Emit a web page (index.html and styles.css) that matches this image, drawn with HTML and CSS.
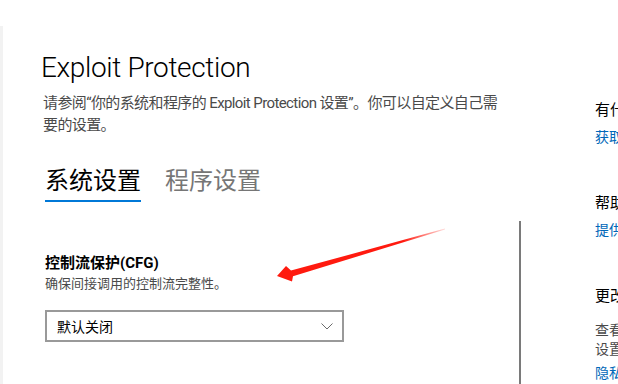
FILE: index.html
```html
<!DOCTYPE html>
<html lang="zh-CN">
<head>
<meta charset="utf-8">
<title>Exploit Protection</title>
<link rel="stylesheet" href="styles.css">
</head>
<body>
<div class="window">
  <div class="strip"></div>
  <main class="main">
    <h1 class="title">Exploit Protection</h1>
    <p class="desc">请参阅“你的系统和程序的 Exploit Protection 设置”。你可以自定义自己需<br>要的设置。</p>
    <nav class="tabs">
      <span class="tab tab-active">系统设置</span>
      <span class="tab">程序设置</span>
    </nav>
    <div class="body">
      <section class="content">
        <h2 class="setting-title">控制流保护(CFG)</h2>
        <p class="setting-desc">确保间接调用的控制流完整性。</p>
        <div class="select">
          <span class="select-text">默认关闭</span>
          <svg class="chevron" width="12" height="7" viewBox="0 0 12 7"><path d="M0.5 0.5 L6 6 L11.5 0.5" fill="none" stroke="#6b6b6b" stroke-width="1"/></svg>
        </div>
      </section>
      <div class="scrollbar"></div>
    </div>
  </main>
  <aside class="side">
    <div class="side-group">
      <div class="side-head">有什么疑问？</div>
      <a class="side-link">获取帮助</a>
    </div>
    <div class="side-group">
      <div class="side-head">帮助改进</div>
      <a class="side-link">提供反馈</a>
    </div>
    <div class="side-group">
      <div class="side-head">更改隐私设置</div>
      <div class="side-text">查看和更改<br>设置</div>
      <a class="side-link">隐私声明</a>
    </div>
  </aside>
  <svg class="arrow" width="618" height="384" viewBox="0 0 618 384">
    <defs>
      <linearGradient id="fade" x1="277" y1="0" x2="445" y2="0" gradientUnits="userSpaceOnUse">
        <stop offset="0" stop-color="#ff1a0f"/>
        <stop offset="0.75" stop-color="#ff1a0f"/>
        <stop offset="1" stop-color="#ff1a0f" stop-opacity="0.15"/>
      </linearGradient>
    </defs>
    <polygon fill="url(#fade)" points="445,228.6 445,229.6 293,276.2 292,281.5 277,276 286,266 291,270.6"/>
  </svg>
</div>
</body>
</html>
```

FILE: styles.css
```css
* { box-sizing: border-box; }
html, body { margin: 0; padding: 0; background: #fff; }
body {
  font-family: "Roboto", "Liberation Sans", "Noto Sans CJK SC", sans-serif;
  color: #000;
  width: 618px;
  height: 384px;
  overflow: hidden;
}
.window {
  position: relative;
  display: flex;
  width: 618px;
  height: 384px;
  overflow: hidden;
}
.strip {
  width: 3px;
  margin-top: 26px;
  background: #f2f2f2;
  flex: none;
}
.main {
  width: 518px;
  flex: none;
  padding: 50px 0 0 38px;
  display: flex;
  flex-direction: column;
}
.title {
  margin: 0;
  font-family: "Roboto", sans-serif;
  font-weight: 300;
  font-size: 28px;
  line-height: 36px;
  letter-spacing: -0.35px;
  color: #000;
  white-space: nowrap;
}
.desc {
  margin: 6px 0 0 2px;
  font-family: "Roboto", "Liberation Sans", "Noto Sans CJK SC", sans-serif;
  font-size: 15px;
  line-height: 22px;
  letter-spacing: -0.6px;
  color: #4a4a4a;
  white-space: nowrap;
}
.tabs {
  display: flex;
  gap: 24px;
  margin: 28px 0 0 4px;
}
.tab {
  font-family: "Noto Sans CJK SC", sans-serif;
  font-size: 24px;
  line-height: 30px;
  color: #767676;
  padding-bottom: 6px;
  border-bottom: 2px solid transparent;
}
.tab-active {
  color: #000;
  border-bottom-color: #0078d7;
}
.body {
  flex: 1;
  display: flex;
  margin-top: 19px;
}
.content {
  flex: 1;
  padding: 32px 0 0 4px;
}
.setting-title {
  margin: 0;
  font-family: "Roboto", "Noto Sans CJK SC", sans-serif;
  font-weight: 700;
  font-size: 15px;
  line-height: 20px;
  color: #000;
}
.setting-desc {
  margin: 0;
  font-family: "Noto Sans CJK SC", sans-serif;
  font-size: 13px;
  line-height: 20px;
  color: #4a4a4a;
}
.select {
  margin-top: 17px;
  width: 299px;
  height: 32px;
  border: 2px solid #999;
  display: flex;
  align-items: center;
  justify-content: space-between;
  padding: 0 9px 0 10px;
}
.select-text {
  font-family: "Noto Sans CJK SC", sans-serif;
  font-size: 14px;
  color: #000;
}
.chevron { display: block; }
.scrollbar {
  width: 2px;
  background: #7a7a7a;
  flex: none;
}
.side {
  margin-left: 74px;
  padding-top: 98px;
  white-space: nowrap;
  font-family: "Noto Sans CJK SC", sans-serif;
}
.side-group { margin-bottom: 45px; }
.side-head {
  font-size: 15px;
  line-height: 22px;
  color: #000;
}
.side-link {
  display: block;
  margin-top: 6px;
  font-size: 14px;
  line-height: 20px;
  color: #0067b8;
}
.side-text {
  margin-top: 14px;
  font-size: 14px;
  line-height: 19px;
  color: #4a4a4a;
}
.side-text + .side-link { margin-top: 4px; }
.arrow {
  position: absolute;
  left: 0;
  top: 0;
  pointer-events: none;
}
```
